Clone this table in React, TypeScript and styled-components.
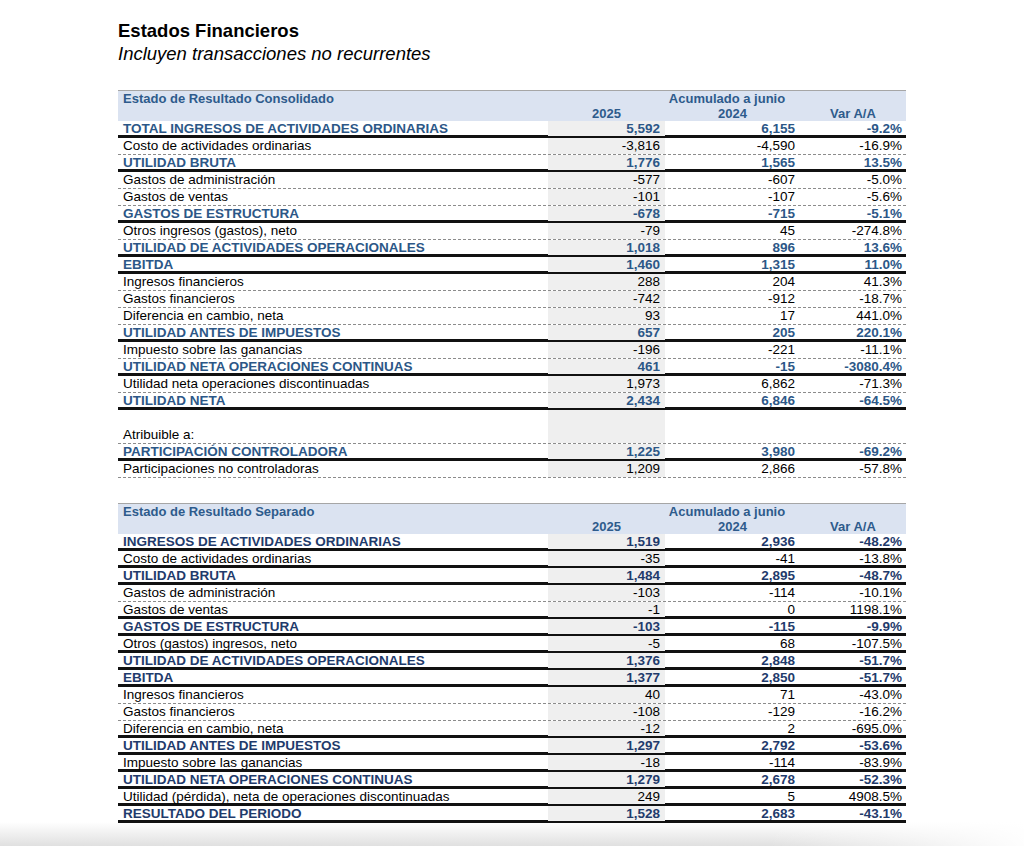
import React from 'react'
import styled, { createGlobalStyle } from 'styled-components'

// Tipos para las filas del estado
type Line = 'thick' | 'dash' | 'none'
type Row = {
    label: string
    y25?: string
    y24?: string
    varAA?: string
    bold?: boolean
    line?: Line
}

const consolidado: Row[] = [
    { label: 'TOTAL INGRESOS DE ACTIVIDADES ORDINARIAS', y25: '5,592', y24: '6,155', varAA: '-9.2%', bold: true },
    { label: 'Costo de actividades ordinarias', y25: '-3,816', y24: '-4,590', varAA: '-16.9%' },
    { label: 'UTILIDAD BRUTA', y25: '1,776', y24: '1,565', varAA: '13.5%', bold: true },
    { label: 'Gastos de administración', y25: '-577', y24: '-607', varAA: '-5.0%' },
    { label: 'Gastos de ventas', y25: '-101', y24: '-107', varAA: '-5.6%' },
    { label: 'GASTOS DE ESTRUCTURA', y25: '-678', y24: '-715', varAA: '-5.1%', bold: true },
    { label: 'Otros ingresos (gastos), neto', y25: '-79', y24: '45', varAA: '-274.8%' },
    { label: 'UTILIDAD DE ACTIVIDADES OPERACIONALES', y25: '1,018', y24: '896', varAA: '13.6%', bold: true },
    { label: 'EBITDA', y25: '1,460', y24: '1,315', varAA: '11.0%', bold: true },
    { label: 'Ingresos financieros', y25: '288', y24: '204', varAA: '41.3%' },
    { label: 'Gastos financieros', y25: '-742', y24: '-912', varAA: '-18.7%' },
    { label: 'Diferencia en cambio, neta', y25: '93', y24: '17', varAA: '441.0%' },
    { label: 'UTILIDAD ANTES DE IMPUESTOS', y25: '657', y24: '205', varAA: '220.1%', bold: true },
    { label: 'Impuesto sobre las ganancias', y25: '-196', y24: '-221', varAA: '-11.1%' },
    { label: 'UTILIDAD NETA OPERACIONES CONTINUAS', y25: '461', y24: '-15', varAA: '-3080.4%', bold: true },
    { label: 'Utilidad neta operaciones discontinuadas', y25: '1,973', y24: '6,862', varAA: '-71.3%' },
    { label: 'UTILIDAD NETA', y25: '2,434', y24: '6,846', varAA: '-64.5%', bold: true },
    { label: '', line: 'none' },
    { label: 'Atribuible a:' },
    { label: 'PARTICIPACIÓN CONTROLADORA', y25: '1,225', y24: '3,980', varAA: '-69.2%', bold: true },
    { label: 'Participaciones no controladoras', y25: '1,209', y24: '2,866', varAA: '-57.8%' },
]

const separado: Row[] = [
    { label: 'INGRESOS DE ACTIVIDADES ORDINARIAS', y25: '1,519', y24: '2,936', varAA: '-48.2%', bold: true },
    { label: 'Costo de actividades ordinarias', y25: '-35', y24: '-41', varAA: '-13.8%', line: 'thick' },
    { label: 'UTILIDAD BRUTA', y25: '1,484', y24: '2,895', varAA: '-48.7%', bold: true },
    { label: 'Gastos de administración', y25: '-103', y24: '-114', varAA: '-10.1%' },
    { label: 'Gastos de ventas', y25: '-1', y24: '0', varAA: '1198.1%', line: 'thick' },
    { label: 'GASTOS DE ESTRUCTURA', y25: '-103', y24: '-115', varAA: '-9.9%', bold: true },
    { label: 'Otros (gastos) ingresos, neto', y25: '-5', y24: '68', varAA: '-107.5%', line: 'thick' },
    { label: 'UTILIDAD DE ACTIVIDADES OPERACIONALES', y25: '1,376', y24: '2,848', varAA: '-51.7%', bold: true },
    { label: 'EBITDA', y25: '1,377', y24: '2,850', varAA: '-51.7%', bold: true },
    { label: 'Ingresos financieros', y25: '40', y24: '71', varAA: '-43.0%' },
    { label: 'Gastos financieros', y25: '-108', y24: '-129', varAA: '-16.2%' },
    { label: 'Diferencia en cambio, neta', y25: '-12', y24: '2', varAA: '-695.0%', line: 'thick' },
    { label: 'UTILIDAD ANTES DE IMPUESTOS', y25: '1,297', y24: '2,792', varAA: '-53.6%', bold: true },
    { label: 'Impuesto sobre las ganancias', y25: '-18', y24: '-114', varAA: '-83.9%', line: 'thick' },
    { label: 'UTILIDAD NETA OPERACIONES CONTINUAS', y25: '1,279', y24: '2,678', varAA: '-52.3%', bold: true },
    { label: 'Utilidad (pérdida), neta de operaciones discontinuadas', y25: '249', y24: '5', varAA: '4908.5%', line: 'thick' },
    { label: 'RESULTADO DEL PERIODO', y25: '1,528', y24: '2,683', varAA: '-43.1%', bold: true },
]

function Statement({ title, rows, tone }: { title: string; rows: Row[]; tone: string }) {
    return (
        <Table>
            <HeadBand>
                <HeadCell>{title}</HeadCell>
                <HeadSpan>Acumulado a junio</HeadSpan>
                <HeadCell />
                <HeadCenter>2025</HeadCenter>
                <HeadCenter>2024</HeadCenter>
                <HeadCenter>Var A/A</HeadCenter>
            </HeadBand>
            {rows.map((r, i) => {
                const line: Line = r.line ?? (r.bold ? 'thick' : 'dash')
                return (
                    <DataRow key={i} $line={line} $bold={!!r.bold} $tone={tone}>
                        <Label>{r.label}</Label>
                        <Num $shaded>{r.y25}</Num>
                        <Num>{r.y24}</Num>
                        <Num $pad={4}>{r.varAA}</Num>
                    </DataRow>
                )
            })}
        </Table>
    )
}

export default function App() {
    return (
        <Page>
            <GlobalStyle />
            <Title>Estados Financieros</Title>
            <Subtitle>Incluyen transacciones no recurrentes</Subtitle>
            <Statement title="Estado de Resultado Consolidado" rows={consolidado} tone="#2c5787" />
            <Spacer />
            <Statement title="Estado de Resultado Separado" rows={separado} tone="#1f3b6c" />
        </Page>
    )
}

// Styles
const GlobalStyle = createGlobalStyle`
    html, body { margin: 0; padding: 0; background: #fff; }
    body { font-family: "Liberation Sans", Arial, sans-serif; color: #000; }
`

const Page = styled.div`
    box-sizing: border-box;
    min-height: 846px;
    padding: 20px 0 0 118px;
    background:
        linear-gradient(to right, rgba(255,255,255,0) 75%, rgba(255,255,255,0.95) 100%),
        linear-gradient(to bottom, #fff 0, #fff 822px, #e0e0e0 846px);
`

const Title = styled.h1`
    margin: 0;
    font-size: 18.5px;
    line-height: 22px;
    font-weight: bold;
`

const Subtitle = styled.h2`
    margin: 1px 0 25px;
    font-size: 18.5px;
    line-height: 22px;
    font-weight: normal;
    font-style: italic;
`

const cols = '430px 117px 135px 106px'

const Table = styled.div`
    width: 788px;
    font-size: 13.5px;
`

const Spacer = styled.div`
    height: 25px;
`

const HeadBand = styled.div`
    display: grid;
    grid-template-columns: ${cols};
    grid-template-rows: 15px 15px;
    height: 31px;
    box-sizing: border-box;
    background: #dbe3f1;
    border-top: 1px solid #a6a6a6;
    color: #2e5b8c;
    font-weight: bold;
    font-size: 13px;
    line-height: 15px;
`

const HeadCell = styled.div`
    padding-left: 5px;
    white-space: nowrap;
`

const HeadSpan = styled.div`
    grid-column: 2 / span 3;
    text-align: center;
`

const HeadCenter = styled.div`
    text-align: center;
`

const DataRow = styled.div<{ $line: Line; $bold: boolean; $tone: string }>`
    display: grid;
    grid-template-columns: ${cols};
    height: 17px;
    box-sizing: border-box;
    line-height: 14px;
    border-bottom: ${p =>
        p.$line === 'thick' ? '3px solid #111' : p.$line === 'dash' ? '1px dashed #8c8c8c' : '0 none'};
    color: ${p => (p.$bold ? p.$tone : '#000')};
    font-weight: ${p => (p.$bold ? 'bold' : 'normal')};
`

const Label = styled.div`
    padding: 1px 0 0 5px;
    white-space: nowrap;
`

const Num = styled.div<{ $shaded?: boolean; $pad?: number }>`
    padding: 1px ${p => p.$pad ?? 5}px 0 0;
    text-align: right;
    background: ${p => (p.$shaded ? '#efefef' : 'transparent')};
`
